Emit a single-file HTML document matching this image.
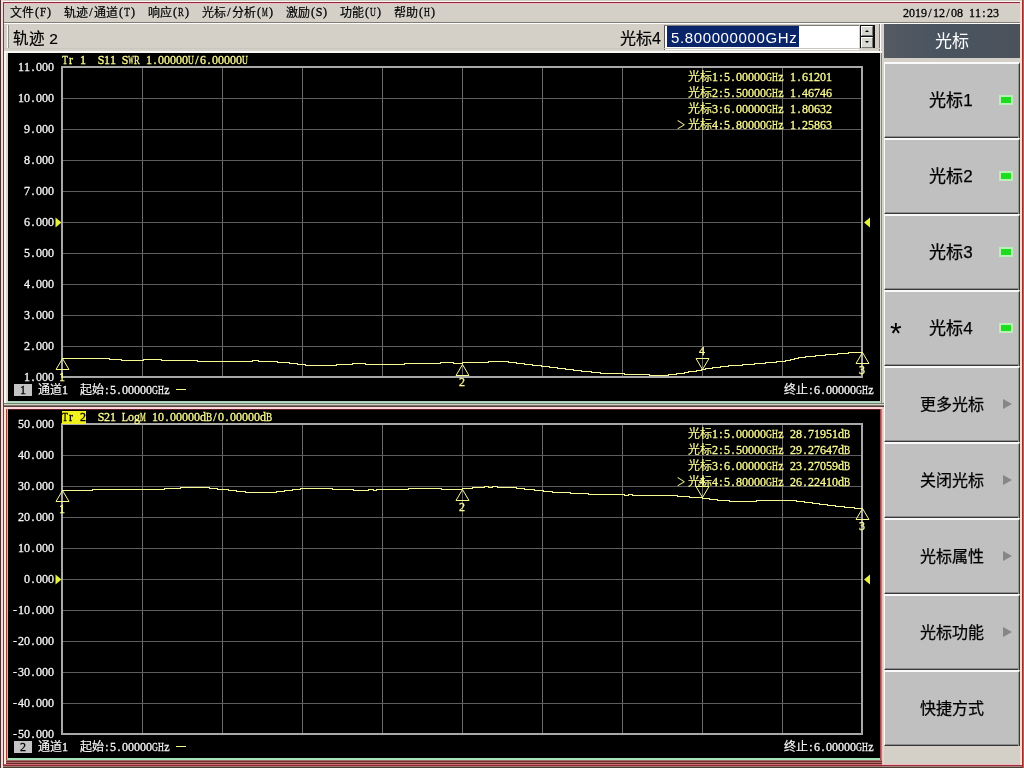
<!DOCTYPE html>
<html lang="zh-CN">
<head>
<meta charset="utf-8">
<title>Network Analyzer</title>
<style>
html,body{margin:0;padding:0;}
body{width:1024px;height:768px;overflow:hidden;position:relative;background:#d4d0c8;font-family:"Liberation Sans",sans-serif;}
.a{position:absolute;}
.m{position:absolute;font-family:"Liberation Serif",serif;font-size:12px;line-height:12px;white-space:pre;display:flex;-webkit-text-stroke:.3px;}
.m i{display:flex;justify-content:center;width:6px;flex:none;font-style:normal;}
.x48{transform:scaleX(.48);}.x54{transform:scaleX(.54);}.x68{transform:scaleX(.68);}.x72{transform:scaleX(.72);}.x77{transform:scaleX(.77);}.x86{transform:scaleX(.86);}.x92{transform:scaleX(.92);}
.c{position:absolute;font-family:"Liberation Sans",sans-serif;font-size:12px;line-height:12px;white-space:pre;-webkit-text-stroke:.2px;}
.y{color:#f9f992;}
.w{color:#f4f4f4;}
.k{color:#000;}
.btn{position:absolute;left:884px;width:136px;height:76px;background:#c0c0c0;box-sizing:border-box;border-top:2px solid #fafafa;border-left:1px solid #fcfcf4;border-bottom:1px solid #383838;border-right:1px solid #2c402c;}
.btn:before{content:'';position:absolute;left:0;right:0;bottom:0;height:1px;background:#8c8c8c;}
.btn:after{content:'';position:absolute;top:0;bottom:-1px;right:0;width:1px;background:#8c9c90;}
.bt{-webkit-text-stroke:.25px;position:absolute;left:0;top:27px;width:134px;text-align:center;font-size:16px;line-height:20px;color:#000;}
.led{position:absolute;left:114px;top:31px;width:10px;height:6px;background:#1fdc1f;border:2px solid #b8f0b8;}
.arr{position:absolute;left:118px;top:31px;width:0;height:0;border-top:5px solid transparent;border-bottom:5px solid transparent;border-left:9px solid #868686;}
</style>
</head>
<body>
<div id="root" style="position:absolute;left:0;top:0;width:1024px;height:768px;will-change:transform">

<div class="a" style="left:0px;top:0px;width:1024px;height:1px;background:#cfcfc4"></div>
<div class="a" style="left:0px;top:1px;width:1024px;height:1px;background:#fbf6f2"></div>
<div class="a" style="left:0px;top:2px;width:1024px;height:1px;background:#8e2a3a"></div>
<div class="a" style="left:0px;top:3px;width:1024px;height:1px;background:#f0b8c0"></div>
<div class="a" style="left:0px;top:764px;width:1024px;height:1px;background:#f6b6c0"></div>
<div class="a" style="left:0px;top:765px;width:1024px;height:1px;background:#983040"></div>
<div class="a" style="left:0px;top:766px;width:1024px;height:1px;background:#a88478"></div>
<div class="a" style="left:0px;top:767px;width:1024px;height:1px;background:#4c4034"></div>
<div class="a" style="left:0px;top:0px;width:1px;height:768px;background:#44342f"></div>
<div class="a" style="left:1px;top:0px;width:2px;height:768px;background:#fcd6da"></div>
<div class="a" style="left:3px;top:2px;width:1px;height:764px;background:#7e3a40"></div>
<div class="a" style="left:1020px;top:2px;width:2px;height:763px;background:#fbdccf"></div>
<div class="a" style="left:1022px;top:0px;width:1px;height:768px;background:#983030"></div>
<div class="a" style="left:1023px;top:0px;width:1px;height:768px;background:#d0545c"></div>
<span class="c k" style="left:10px;top:7px">文件</span>
<span class="m k" style="left:34px;top:6px"><i>(</i><i class="x92">F</i><i>)</i></span>
<span class="c k" style="left:64px;top:7px">轨迹</span>
<span class="m k" style="left:88px;top:6px"><i>/</i></span>
<span class="c k" style="left:94px;top:7px">通道</span>
<span class="m k" style="left:118px;top:6px"><i>(</i><i class="x77">T</i><i>)</i></span>
<span class="c k" style="left:148px;top:7px">响应</span>
<span class="m k" style="left:172px;top:6px"><i>(</i><i class="x72">R</i><i>)</i></span>
<span class="c k" style="left:202px;top:7px">光标</span>
<span class="m k" style="left:226px;top:6px"><i>/</i></span>
<span class="c k" style="left:232px;top:7px">分析</span>
<span class="m k" style="left:256px;top:6px"><i>(</i><i class="x54">M</i><i>)</i></span>
<span class="c k" style="left:286px;top:7px">激励</span>
<span class="m k" style="left:310px;top:6px"><i>(</i><i>S</i><i>)</i></span>
<span class="c k" style="left:340px;top:7px">功能</span>
<span class="m k" style="left:364px;top:6px"><i>(</i><i class="x68">U</i><i>)</i></span>
<span class="c k" style="left:394px;top:7px">帮助</span>
<span class="m k" style="left:418px;top:6px"><i>(</i><i class="x68">H</i><i>)</i></span>
<span class="m k" style="left:903px;top:7px"><i>2</i><i>0</i><i>1</i><i>9</i><i>/</i><i>1</i><i>2</i><i>/</i><i>0</i><i>8</i><i> </i><i>1</i><i>1</i><i>:</i><i>2</i><i>3</i></span>
<div class="a" style="left:4px;top:22px;width:1016px;height:1px;background:#807c74"></div>
<div class="a" style="left:4px;top:23px;width:1016px;height:1px;background:#ffffff"></div>
<div class="a" style="left:7px;top:25px;width:1px;height:23px;background:#f4fff4"></div>
<div class="a" style="left:8px;top:25px;width:1px;height:23px;background:#8c948c"></div>
<div class="a k" style="left:13px;top:29px;font-size:15.5px;line-height:20px;white-space:pre;-webkit-text-stroke:.2px">轨迹 2</div>
<div class="a k" style="left:620px;top:29px;font-size:16px;line-height:20px;white-space:pre;-webkit-text-stroke:.2px">光标4</div>
<div class="a" style="left:664px;top:25px;width:195px;height:25px;background:#fff;box-sizing:border-box;border-top:1px solid #7c7c7c;border-left:1px solid #585858;"></div>
<div class="a" style="left:667px;top:26px;width:132px;height:21px;background:#0a246a;color:#fff;font-size:15px;letter-spacing:.62px;line-height:21px;white-space:pre;padding:1px 0 0 4px;box-sizing:border-box;overflow:hidden">5.800000000GHz</div>
<div class="a" style="left:860px;top:25px;width:15px;height:24px;background:#101010"></div>
<div class="a" style="left:861px;top:26px;width:12px;height:10px;background:#d8d8d0;box-sizing:border-box;border-top:1px solid #fff;border-left:1px solid #fff;border-right:1px solid #787878;border-bottom:1px solid #787878"></div>
<div class="a" style="left:861px;top:37px;width:12px;height:11px;background:#d8d8d0;box-sizing:border-box;border-top:1px solid #fff;border-left:1px solid #fff;border-right:1px solid #787878;border-bottom:1px solid #787878"></div>
<div class="a" style="left:865px;top:30px;width:0;height:0;border-left:2.5px solid transparent;border-right:2.5px solid transparent;border-bottom:2.5px solid #000"></div>
<div class="a" style="left:865px;top:41px;width:0;height:0;border-left:2.5px solid transparent;border-right:2.5px solid transparent;border-top:2.5px solid #000"></div>
<div class="a" style="left:879px;top:24px;width:1px;height:27px;background:#7c7c78"></div>
<div class="a" style="left:880px;top:24px;width:1px;height:27px;background:#ffffff"></div>
<div class="a" style="left:4px;top:48px;width:876px;height:1px;background:#c8c8c0"></div>
<div class="a" style="left:4px;top:51px;width:878px;height:2px;background:#f8f8f4"></div>
<div class="a" style="left:4px;top:53px;width:2px;height:350px;background:#f8fcf0"></div>
<div class="a" style="left:6px;top:53px;width:2px;height:350px;background:#d8dacc"></div>
<div class="a" style="left:8px;top:53px;width:872px;height:348px;background:#000"></div>
<div class="a" style="left:8px;top:401px;width:872px;height:1px;background:#a8d4bc"></div>
<div class="a" style="left:8px;top:402px;width:872px;height:1px;background:#b8dcc8"></div>
<div class="a" style="left:880px;top:53px;width:1px;height:350px;background:#d4d4cc"></div>
<div class="a" style="left:881px;top:53px;width:1px;height:350px;background:#84847c"></div>
<div class="a" style="left:882px;top:53px;width:2px;height:350px;background:#d4d4cc"></div>
<div class="a" style="left:4px;top:403px;width:880px;height:1px;background:#70846c"></div>
<div class="a" style="left:4px;top:404px;width:880px;height:1px;background:#d0d4c4"></div>
<div class="a" style="left:4px;top:405px;width:880px;height:1px;background:#80746c"></div>
<div class="a" style="left:4px;top:406px;width:880px;height:1px;background:#544038"></div>
<div class="a" style="left:4px;top:407px;width:2px;height:357px;background:#fce8d8"></div>
<div class="a" style="left:6px;top:407px;width:876px;height:2px;background:#fcd8dc"></div>
<div class="a" style="left:6px;top:409px;width:1px;height:353px;background:#a04838"></div>
<div class="a" style="left:7px;top:409px;width:1px;height:353px;background:#f4a098"></div>
<div class="a" style="left:8px;top:409px;width:872px;height:349px;background:#000"></div>
<div class="a" style="left:8px;top:409px;width:872px;height:1px;background:#5c1c24"></div>
<div class="a" style="left:880px;top:409px;width:1px;height:353px;background:#a04850"></div>
<div class="a" style="left:881px;top:409px;width:1px;height:353px;background:#d07078"></div>
<div class="a" style="left:882px;top:407px;width:1px;height:357px;background:#e8c4bc"></div>
<div class="a" style="left:883px;top:407px;width:1px;height:357px;background:#e0dccc"></div>
<div class="a" style="left:8px;top:758px;width:872px;height:2px;background:#a4e4b8"></div>
<div class="a" style="left:6px;top:760px;width:876px;height:1px;background:#a07068"></div>
<div class="a" style="left:6px;top:761px;width:876px;height:1px;background:#802c30"></div>
<div class="a" style="left:6px;top:762px;width:876px;height:1px;background:#a86c6c"></div>
<div class="a" style="left:6px;top:763px;width:876px;height:1px;background:#6c2c2c"></div>
<div class="a" style="left:4px;top:764px;width:878px;height:1px;background:#d06870"></div>
<div class="a" style="left:4px;top:765px;width:878px;height:1px;background:#8c2c34"></div>
<div class="a" style="left:4px;top:766px;width:878px;height:1px;background:#9c7c70"></div>
<svg class="a" style="left:0;top:0" width="1024" height="768" viewBox="0 0 1024 768" shape-rendering="crispEdges">
<rect x="142" y="67" width="1" height="310" fill="#6a6a6a"/>
<rect x="222" y="67" width="1" height="310" fill="#6a6a6a"/>
<rect x="302" y="67" width="1" height="310" fill="#6a6a6a"/>
<rect x="382" y="67" width="1" height="310" fill="#6a6a6a"/>
<rect x="462" y="67" width="1" height="310" fill="#6a6a6a"/>
<rect x="542" y="67" width="1" height="310" fill="#6a6a6a"/>
<rect x="622" y="67" width="1" height="310" fill="#6a6a6a"/>
<rect x="702" y="67" width="1" height="310" fill="#6a6a6a"/>
<rect x="782" y="67" width="1" height="310" fill="#6a6a6a"/>
<rect x="62" y="98" width="800" height="1" fill="#5e5e5e"/>
<rect x="62" y="129" width="800" height="1" fill="#5e5e5e"/>
<rect x="62" y="160" width="800" height="1" fill="#5e5e5e"/>
<rect x="62" y="191" width="800" height="1" fill="#5e5e5e"/>
<rect x="62" y="222" width="800" height="1" fill="#5e5e5e"/>
<rect x="62" y="253" width="800" height="1" fill="#5e5e5e"/>
<rect x="62" y="284" width="800" height="1" fill="#5e5e5e"/>
<rect x="62" y="315" width="800" height="1" fill="#5e5e5e"/>
<rect x="62" y="346" width="800" height="1" fill="#5e5e5e"/>
<rect x="61" y="66" width="2" height="312" fill="#a8a8a8"/>
<rect x="61" y="66" width="802" height="2" fill="#a8a8a8"/>
<rect x="861" y="66" width="2" height="312" fill="#a8a8a8"/>
<rect x="61" y="376" width="802" height="2" fill="#a8a8a8"/>
<rect x="142" y="424" width="1" height="310" fill="#6a6a6a"/>
<rect x="222" y="424" width="1" height="310" fill="#6a6a6a"/>
<rect x="302" y="424" width="1" height="310" fill="#6a6a6a"/>
<rect x="382" y="424" width="1" height="310" fill="#6a6a6a"/>
<rect x="462" y="424" width="1" height="310" fill="#6a6a6a"/>
<rect x="542" y="424" width="1" height="310" fill="#6a6a6a"/>
<rect x="622" y="424" width="1" height="310" fill="#6a6a6a"/>
<rect x="702" y="424" width="1" height="310" fill="#6a6a6a"/>
<rect x="782" y="424" width="1" height="310" fill="#6a6a6a"/>
<rect x="62" y="455" width="800" height="1" fill="#5e5e5e"/>
<rect x="62" y="486" width="800" height="1" fill="#5e5e5e"/>
<rect x="62" y="517" width="800" height="1" fill="#5e5e5e"/>
<rect x="62" y="548" width="800" height="1" fill="#5e5e5e"/>
<rect x="62" y="579" width="800" height="1" fill="#5e5e5e"/>
<rect x="62" y="610" width="800" height="1" fill="#5e5e5e"/>
<rect x="62" y="641" width="800" height="1" fill="#5e5e5e"/>
<rect x="62" y="672" width="800" height="1" fill="#5e5e5e"/>
<rect x="62" y="703" width="800" height="1" fill="#5e5e5e"/>
<rect x="61" y="423" width="2" height="312" fill="#a8a8a8"/>
<rect x="61" y="423" width="802" height="2" fill="#a8a8a8"/>
<rect x="861" y="423" width="2" height="312" fill="#a8a8a8"/>
<rect x="61" y="733" width="802" height="2" fill="#a8a8a8"/>
<rect x="62" y="358" width="48" height="1" fill="#f9f992"/>
<rect x="109" y="359" width="13" height="1" fill="#f9f992"/>
<rect x="121" y="360" width="23" height="1" fill="#f9f992"/>
<rect x="143" y="359" width="19" height="1" fill="#f9f992"/>
<rect x="161" y="360" width="37" height="1" fill="#f9f992"/>
<rect x="197" y="361" width="56" height="1" fill="#f9f992"/>
<rect x="252" y="360" width="7" height="1" fill="#f9f992"/>
<rect x="258" y="361" width="20" height="1" fill="#f9f992"/>
<rect x="277" y="362" width="13" height="1" fill="#f9f992"/>
<rect x="289" y="363" width="9" height="1" fill="#f9f992"/>
<rect x="297" y="364" width="9" height="1" fill="#f9f992"/>
<rect x="305" y="365" width="32" height="1" fill="#f9f992"/>
<rect x="336" y="364" width="17" height="1" fill="#f9f992"/>
<rect x="352" y="363" width="14" height="1" fill="#f9f992"/>
<rect x="365" y="364" width="40" height="1" fill="#f9f992"/>
<rect x="404" y="363" width="37" height="1" fill="#f9f992"/>
<rect x="440" y="362" width="14" height="1" fill="#f9f992"/>
<rect x="453" y="363" width="10" height="1" fill="#f9f992"/>
<rect x="462" y="362" width="27" height="1" fill="#f9f992"/>
<rect x="488" y="361" width="21" height="1" fill="#f9f992"/>
<rect x="508" y="362" width="9" height="1" fill="#f9f992"/>
<rect x="516" y="363" width="9" height="1" fill="#f9f992"/>
<rect x="524" y="364" width="9" height="1" fill="#f9f992"/>
<rect x="532" y="365" width="10" height="1" fill="#f9f992"/>
<rect x="541" y="366" width="9" height="1" fill="#f9f992"/>
<rect x="549" y="367" width="9" height="1" fill="#f9f992"/>
<rect x="557" y="368" width="9" height="1" fill="#f9f992"/>
<rect x="565" y="369" width="9" height="1" fill="#f9f992"/>
<rect x="573" y="370" width="9" height="1" fill="#f9f992"/>
<rect x="581" y="371" width="11" height="1" fill="#f9f992"/>
<rect x="591" y="372" width="10" height="1" fill="#f9f992"/>
<rect x="600" y="373" width="25" height="1" fill="#f9f992"/>
<rect x="624" y="374" width="26" height="1" fill="#f9f992"/>
<rect x="649" y="375" width="20" height="1" fill="#f9f992"/>
<rect x="668" y="374" width="9" height="1" fill="#f9f992"/>
<rect x="676" y="373" width="9" height="1" fill="#f9f992"/>
<rect x="684" y="372" width="5" height="1" fill="#f9f992"/>
<rect x="688" y="371" width="9" height="1" fill="#f9f992"/>
<rect x="696" y="370" width="6" height="1" fill="#f9f992"/>
<rect x="701" y="369" width="5" height="1" fill="#f9f992"/>
<rect x="705" y="368" width="8" height="1" fill="#f9f992"/>
<rect x="712" y="367" width="9" height="1" fill="#f9f992"/>
<rect x="720" y="366" width="9" height="1" fill="#f9f992"/>
<rect x="728" y="365" width="15" height="1" fill="#f9f992"/>
<rect x="742" y="364" width="13" height="1" fill="#f9f992"/>
<rect x="754" y="363" width="12" height="1" fill="#f9f992"/>
<rect x="765" y="362" width="12" height="1" fill="#f9f992"/>
<rect x="776" y="361" width="10" height="1" fill="#f9f992"/>
<rect x="785" y="360" width="6" height="1" fill="#f9f992"/>
<rect x="790" y="359" width="5" height="1" fill="#f9f992"/>
<rect x="794" y="358" width="5" height="1" fill="#f9f992"/>
<rect x="798" y="357" width="8" height="1" fill="#f9f992"/>
<rect x="805" y="356" width="11" height="1" fill="#f9f992"/>
<rect x="815" y="355" width="11" height="1" fill="#f9f992"/>
<rect x="825" y="354" width="13" height="1" fill="#f9f992"/>
<rect x="837" y="353" width="12" height="1" fill="#f9f992"/>
<rect x="848" y="352" width="15" height="1" fill="#f9f992"/>
<rect x="62" y="490" width="31" height="1" fill="#f9f992"/>
<rect x="92" y="489" width="73" height="1" fill="#f9f992"/>
<rect x="164" y="488" width="17" height="1" fill="#f9f992"/>
<rect x="180" y="487" width="30" height="1" fill="#f9f992"/>
<rect x="209" y="488" width="9" height="1" fill="#f9f992"/>
<rect x="217" y="489" width="12" height="1" fill="#f9f992"/>
<rect x="228" y="490" width="9" height="1" fill="#f9f992"/>
<rect x="236" y="491" width="10" height="1" fill="#f9f992"/>
<rect x="245" y="492" width="32" height="1" fill="#f9f992"/>
<rect x="276" y="491" width="9" height="1" fill="#f9f992"/>
<rect x="284" y="490" width="9" height="1" fill="#f9f992"/>
<rect x="292" y="489" width="9" height="1" fill="#f9f992"/>
<rect x="300" y="488" width="33" height="1" fill="#f9f992"/>
<rect x="332" y="489" width="22" height="1" fill="#f9f992"/>
<rect x="353" y="490" width="16" height="1" fill="#f9f992"/>
<rect x="368" y="489" width="6" height="1" fill="#f9f992"/>
<rect x="373" y="490" width="4" height="1" fill="#f9f992"/>
<rect x="376" y="489" width="33" height="1" fill="#f9f992"/>
<rect x="408" y="488" width="34" height="1" fill="#f9f992"/>
<rect x="441" y="489" width="22" height="1" fill="#f9f992"/>
<rect x="462" y="488" width="11" height="1" fill="#f9f992"/>
<rect x="472" y="487" width="13" height="1" fill="#f9f992"/>
<rect x="484" y="486" width="5" height="1" fill="#f9f992"/>
<rect x="488" y="487" width="5" height="1" fill="#f9f992"/>
<rect x="492" y="486" width="6" height="1" fill="#f9f992"/>
<rect x="497" y="487" width="20" height="1" fill="#f9f992"/>
<rect x="516" y="488" width="9" height="1" fill="#f9f992"/>
<rect x="524" y="489" width="11" height="1" fill="#f9f992"/>
<rect x="534" y="490" width="10" height="1" fill="#f9f992"/>
<rect x="543" y="491" width="10" height="1" fill="#f9f992"/>
<rect x="552" y="492" width="19" height="1" fill="#f9f992"/>
<rect x="570" y="493" width="19" height="1" fill="#f9f992"/>
<rect x="588" y="494" width="37" height="1" fill="#f9f992"/>
<rect x="624" y="495" width="5" height="1" fill="#f9f992"/>
<rect x="628" y="494" width="5" height="1" fill="#f9f992"/>
<rect x="632" y="495" width="46" height="1" fill="#f9f992"/>
<rect x="677" y="496" width="13" height="1" fill="#f9f992"/>
<rect x="689" y="497" width="14" height="1" fill="#f9f992"/>
<rect x="702" y="498" width="8" height="1" fill="#f9f992"/>
<rect x="709" y="499" width="9" height="1" fill="#f9f992"/>
<rect x="717" y="500" width="13" height="1" fill="#f9f992"/>
<rect x="729" y="501" width="28" height="1" fill="#f9f992"/>
<rect x="756" y="500" width="41" height="1" fill="#f9f992"/>
<rect x="796" y="501" width="9" height="1" fill="#f9f992"/>
<rect x="804" y="502" width="9" height="1" fill="#f9f992"/>
<rect x="812" y="503" width="8" height="1" fill="#f9f992"/>
<rect x="819" y="504" width="9" height="1" fill="#f9f992"/>
<rect x="827" y="505" width="9" height="1" fill="#f9f992"/>
<rect x="835" y="506" width="10" height="1" fill="#f9f992"/>
<rect x="844" y="507" width="11" height="1" fill="#f9f992"/>
<rect x="854" y="508" width="9" height="1" fill="#f9f992"/>
<path d="M62.5 358.5 L56 369.5 L69 369.5 Z" fill="none" stroke="#f9f992" stroke-width="1" shape-rendering="auto"/>
<path d="M462.5 364.5 L456 375.5 L469 375.5 Z" fill="none" stroke="#f9f992" stroke-width="1" shape-rendering="auto"/>
<path d="M862.5 352.5 L856 363.5 L869 363.5 Z" fill="none" stroke="#f9f992" stroke-width="1" shape-rendering="auto"/>
<path d="M702.5 369.5 L696 358.5 L709 358.5 Z" fill="none" stroke="#f9f992" stroke-width="1" shape-rendering="auto"/>
<path d="M62.5 490.5 L56 501.5 L69 501.5 Z" fill="none" stroke="#f9f992" stroke-width="1" shape-rendering="auto"/>
<path d="M462.5 489.5 L456 500.5 L469 500.5 Z" fill="none" stroke="#f9f992" stroke-width="1" shape-rendering="auto"/>
<path d="M862.5 508.5 L856 519.5 L869 519.5 Z" fill="none" stroke="#f9f992" stroke-width="1" shape-rendering="auto"/>
<path d="M702.5 497.5 L696 486.5 L709 486.5 Z" fill="none" stroke="#f9f992" stroke-width="1" shape-rendering="auto"/>
<path d="M55.5 217.5 L61.5 222.5 L55.5 227.5 Z" fill="#e6f23c" shape-rendering="auto"/>
<path d="M870 217.5 L864 222.5 L870 227.5 Z" fill="#e6f23c" shape-rendering="auto"/>
<path d="M55.5 574.5 L61.5 579.5 L55.5 584.5 Z" fill="#e6f23c" shape-rendering="auto"/>
<path d="M870 574.5 L864 579.5 L870 584.5 Z" fill="#e6f23c" shape-rendering="auto"/>
<rect x="176" y="389" width="10" height="1" fill="#f9f992"/>
<rect x="176" y="746" width="10" height="1" fill="#f9f992"/>
</svg>
<span class="m y" style="left:62px;top:54px;"><i class="x77">T</i><i>r</i><i> </i><i>1</i><i> </i><i> </i><i>S</i><i>1</i><i>1</i><i> </i><i>S</i><i class="x48">W</i><i class="x72">R</i><i> </i><i>1</i><i>.</i><i>0</i><i>0</i><i>0</i><i>0</i><i>0</i><i class="x68">U</i><i>/</i><i>6</i><i>.</i><i>0</i><i>0</i><i>0</i><i>0</i><i>0</i><i class="x68">U</i></span>
<span class="m w" style="left:18px;top:61px;"><i>1</i><i>1</i><i>.</i><i>0</i><i>0</i><i>0</i></span>
<span class="m w" style="left:18px;top:92px;"><i>1</i><i>0</i><i>.</i><i>0</i><i>0</i><i>0</i></span>
<span class="m w" style="left:24px;top:123px;"><i>9</i><i>.</i><i>0</i><i>0</i><i>0</i></span>
<span class="m w" style="left:24px;top:154px;"><i>8</i><i>.</i><i>0</i><i>0</i><i>0</i></span>
<span class="m w" style="left:24px;top:185px;"><i>7</i><i>.</i><i>0</i><i>0</i><i>0</i></span>
<span class="m w" style="left:24px;top:216px;"><i>6</i><i>.</i><i>0</i><i>0</i><i>0</i></span>
<span class="m w" style="left:24px;top:247px;"><i>5</i><i>.</i><i>0</i><i>0</i><i>0</i></span>
<span class="m w" style="left:24px;top:278px;"><i>4</i><i>.</i><i>0</i><i>0</i><i>0</i></span>
<span class="m w" style="left:24px;top:309px;"><i>3</i><i>.</i><i>0</i><i>0</i><i>0</i></span>
<span class="m w" style="left:24px;top:340px;"><i>2</i><i>.</i><i>0</i><i>0</i><i>0</i></span>
<span class="m w" style="left:24px;top:371px;"><i>1</i><i>.</i><i>0</i><i>0</i><i>0</i></span>
<span class="c y" style="left:688px;top:71px">光标</span>
<span class="m y" style="left:712px;top:71px;"><i>1</i><i>:</i><i>5</i><i>.</i><i>0</i><i>0</i><i>0</i><i>0</i><i>0</i><i class="x68">G</i><i class="x68">H</i><i>z</i><i> </i><i>1</i><i>.</i><i>6</i><i>1</i><i>2</i><i>0</i><i>1</i></span>
<span class="c y" style="left:688px;top:87px">光标</span>
<span class="m y" style="left:712px;top:87px;"><i>2</i><i>:</i><i>5</i><i>.</i><i>5</i><i>0</i><i>0</i><i>0</i><i>0</i><i class="x68">G</i><i class="x68">H</i><i>z</i><i> </i><i>1</i><i>.</i><i>4</i><i>6</i><i>7</i><i>4</i><i>6</i></span>
<span class="c y" style="left:688px;top:103px">光标</span>
<span class="m y" style="left:712px;top:103px;"><i>3</i><i>:</i><i>6</i><i>.</i><i>0</i><i>0</i><i>0</i><i>0</i><i>0</i><i class="x68">G</i><i class="x68">H</i><i>z</i><i> </i><i>1</i><i>.</i><i>8</i><i>0</i><i>6</i><i>3</i><i>2</i></span>
<span class="c y" style="left:688px;top:119px">光标</span>
<span class="m y" style="left:712px;top:119px;"><i>4</i><i>:</i><i>5</i><i>.</i><i>8</i><i>0</i><i>0</i><i>0</i><i>0</i><i class="x68">G</i><i class="x68">H</i><i>z</i><i> </i><i>1</i><i>.</i><i>2</i><i>5</i><i>8</i><i>6</i><i>3</i></span>
<span class="a y" style="left:677px;top:116px;font-family:'Liberation Serif',serif;font-size:18.5px;line-height:18.5px;transform:scaleX(.8);transform-origin:0 0">&gt;</span>
<span class="m y" style="left:59px;top:371px;"><i>1</i></span>
<span class="m y" style="left:459px;top:376px;"><i>2</i></span>
<span class="m y" style="left:859px;top:364px;"><i>3</i></span>
<span class="m y" style="left:699px;top:345px;"><i>4</i></span>
<div class="a" style="left:14px;top:384px;width:18px;height:12px;background:#c4c4c4"></div>
<span class="m k" style="left:20px;top:384px;"><i>1</i></span>
<span class="c w" style="left:38px;top:384px">通道</span>
<span class="m w" style="left:62px;top:384px;"><i>1</i></span>
<span class="c w" style="left:80px;top:384px">起始</span>
<span class="m w" style="left:104px;top:384px;"><i>:</i><i>5</i><i>.</i><i>0</i><i>0</i><i>0</i><i>0</i><i>0</i><i class="x68">G</i><i class="x68">H</i><i>z</i></span>
<span class="c w" style="left:784px;top:384px">终止</span>
<span class="m w" style="left:808px;top:384px;"><i>:</i><i>6</i><i>.</i><i>0</i><i>0</i><i>0</i><i>0</i><i>0</i><i class="x68">G</i><i class="x68">H</i><i>z</i></span>
<div class="a" style="left:62px;top:411px;width:24px;height:13px;background:#f2f21e"></div>
<span class="m k" style="left:62px;top:411px;"><i class="x77">T</i><i>r</i><i> </i><i>2</i></span>
<span class="m y" style="left:98px;top:411px;"><i>S</i><i>2</i><i>1</i><i> </i><i class="x86">L</i><i>o</i><i>g</i><i class="x54">M</i><i> </i><i>1</i><i>0</i><i>.</i><i>0</i><i>0</i><i>0</i><i>0</i><i>0</i><i>d</i><i class="x77">B</i><i>/</i><i>0</i><i>.</i><i>0</i><i>0</i><i>0</i><i>0</i><i>0</i><i>d</i><i class="x77">B</i></span>
<span class="m w" style="left:18px;top:418px;"><i>5</i><i>0</i><i>.</i><i>0</i><i>0</i><i>0</i></span>
<span class="m w" style="left:18px;top:449px;"><i>4</i><i>0</i><i>.</i><i>0</i><i>0</i><i>0</i></span>
<span class="m w" style="left:18px;top:480px;"><i>3</i><i>0</i><i>.</i><i>0</i><i>0</i><i>0</i></span>
<span class="m w" style="left:18px;top:511px;"><i>2</i><i>0</i><i>.</i><i>0</i><i>0</i><i>0</i></span>
<span class="m w" style="left:18px;top:542px;"><i>1</i><i>0</i><i>.</i><i>0</i><i>0</i><i>0</i></span>
<span class="m w" style="left:24px;top:573px;"><i>0</i><i>.</i><i>0</i><i>0</i><i>0</i></span>
<span class="m w" style="left:12px;top:604px;"><i>-</i><i>1</i><i>0</i><i>.</i><i>0</i><i>0</i><i>0</i></span>
<span class="m w" style="left:12px;top:635px;"><i>-</i><i>2</i><i>0</i><i>.</i><i>0</i><i>0</i><i>0</i></span>
<span class="m w" style="left:12px;top:666px;"><i>-</i><i>3</i><i>0</i><i>.</i><i>0</i><i>0</i><i>0</i></span>
<span class="m w" style="left:12px;top:697px;"><i>-</i><i>4</i><i>0</i><i>.</i><i>0</i><i>0</i><i>0</i></span>
<span class="m w" style="left:12px;top:728px;"><i>-</i><i>5</i><i>0</i><i>.</i><i>0</i><i>0</i><i>0</i></span>
<span class="c y" style="left:688px;top:428px">光标</span>
<span class="m y" style="left:712px;top:428px;"><i>1</i><i>:</i><i>5</i><i>.</i><i>0</i><i>0</i><i>0</i><i>0</i><i>0</i><i class="x68">G</i><i class="x68">H</i><i>z</i><i> </i><i>2</i><i>8</i><i>.</i><i>7</i><i>1</i><i>9</i><i>5</i><i>1</i><i>d</i><i class="x77">B</i></span>
<span class="c y" style="left:688px;top:444px">光标</span>
<span class="m y" style="left:712px;top:444px;"><i>2</i><i>:</i><i>5</i><i>.</i><i>5</i><i>0</i><i>0</i><i>0</i><i>0</i><i class="x68">G</i><i class="x68">H</i><i>z</i><i> </i><i>2</i><i>9</i><i>.</i><i>2</i><i>7</i><i>6</i><i>4</i><i>7</i><i>d</i><i class="x77">B</i></span>
<span class="c y" style="left:688px;top:460px">光标</span>
<span class="m y" style="left:712px;top:460px;"><i>3</i><i>:</i><i>6</i><i>.</i><i>0</i><i>0</i><i>0</i><i>0</i><i>0</i><i class="x68">G</i><i class="x68">H</i><i>z</i><i> </i><i>2</i><i>3</i><i>.</i><i>2</i><i>7</i><i>0</i><i>5</i><i>9</i><i>d</i><i class="x77">B</i></span>
<span class="c y" style="left:688px;top:476px">光标</span>
<span class="m y" style="left:712px;top:476px;"><i>4</i><i>:</i><i>5</i><i>.</i><i>8</i><i>0</i><i>0</i><i>0</i><i>0</i><i class="x68">G</i><i class="x68">H</i><i>z</i><i> </i><i>2</i><i>6</i><i>.</i><i>2</i><i>2</i><i>4</i><i>1</i><i>0</i><i>d</i><i class="x77">B</i></span>
<span class="a y" style="left:677px;top:473px;font-family:'Liberation Serif',serif;font-size:18.5px;line-height:18.5px;transform:scaleX(.8);transform-origin:0 0">&gt;</span>
<span class="m y" style="left:59px;top:503px;"><i>1</i></span>
<span class="m y" style="left:459px;top:501px;"><i>2</i></span>
<span class="m y" style="left:859px;top:520px;"><i>3</i></span>
<span class="m y" style="left:699px;top:475px;"><i>4</i></span>
<div class="a" style="left:14px;top:741px;width:18px;height:12px;background:#c4c4c4"></div>
<span class="m k" style="left:20px;top:741px;"><i>2</i></span>
<span class="c w" style="left:38px;top:741px">通道</span>
<span class="m w" style="left:62px;top:741px;"><i>1</i></span>
<span class="c w" style="left:80px;top:741px">起始</span>
<span class="m w" style="left:104px;top:741px;"><i>:</i><i>5</i><i>.</i><i>0</i><i>0</i><i>0</i><i>0</i><i>0</i><i class="x68">G</i><i class="x68">H</i><i>z</i></span>
<span class="c w" style="left:784px;top:741px">终止</span>
<span class="m w" style="left:808px;top:741px;"><i>:</i><i>6</i><i>.</i><i>0</i><i>0</i><i>0</i><i>0</i><i>0</i><i class="x68">G</i><i class="x68">H</i><i>z</i></span>
<div class="a" style="left:884px;top:24px;width:136px;height:34px;background:linear-gradient(90deg,#565a62,#485460 40%,#4c525c);color:#fff;font-size:17px;line-height:36px;text-align:center">光标</div>
<div class="btn" style="top:62px"><div class="bt" style="font-size:17px;left:-1px">光标1</div><div class="led"></div></div>
<div class="btn" style="top:138px"><div class="bt" style="font-size:17px;left:-1px">光标2</div><div class="led"></div></div>
<div class="btn" style="top:214px"><div class="bt" style="font-size:17px;left:-1px">光标3</div><div class="led"></div></div>
<div class="btn" style="top:290px"><div class="bt" style="font-size:17px;left:-1px">光标4</div><div class="led"></div><div class="a k" style="left:5px;top:26px;font-size:30px;line-height:30px">*</div></div>
<div class="btn" style="top:366px"><div class="bt">更多光标</div><div class="arr"></div></div>
<div class="btn" style="top:442px"><div class="bt">关闭光标</div><div class="arr"></div></div>
<div class="btn" style="top:518px"><div class="bt">光标属性</div><div class="arr"></div></div>
<div class="btn" style="top:594px"><div class="bt">光标功能</div><div class="arr"></div></div>
<div class="btn" style="top:670px"><div class="bt">快捷方式</div></div>
</div>
</body>
</html>
